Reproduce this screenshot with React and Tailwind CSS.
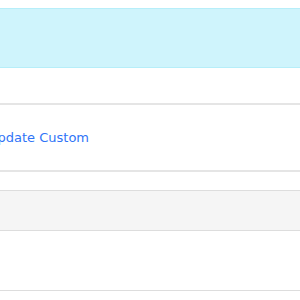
import React from 'react';

// 표 행들
const App = () => {
  return (
    <div className="w-[300px] h-[300px] overflow-hidden bg-white font-['DejaVu_Sans',sans-serif]">
      <div className="h-[8px]" />
      {/* info 행 */}
      <div className="h-[60px] bg-[#cff4fc] border-t border-b border-[#b6eef9]" />
      <div className="h-[35px]" />
      <div className="border-t-2 border-[#e5e5e5]" />
      <div className="h-[65px] flex items-center">
        <a className="ml-[-12px] text-[13px] text-[#2f74f7] whitespace-nowrap">
          Update Custom
        </a>
      </div>
      <div className="border-t-2 border-[#e5e5e5]" />
      <div className="h-[18px]" />
      <div className="h-[41px] bg-[#f5f5f5] border-t border-b border-[#dddddd]" />
      <div className="h-[59px]" />
      <div className="border-t border-[#dddddd]" />
    </div>
  );
};

export default App;
